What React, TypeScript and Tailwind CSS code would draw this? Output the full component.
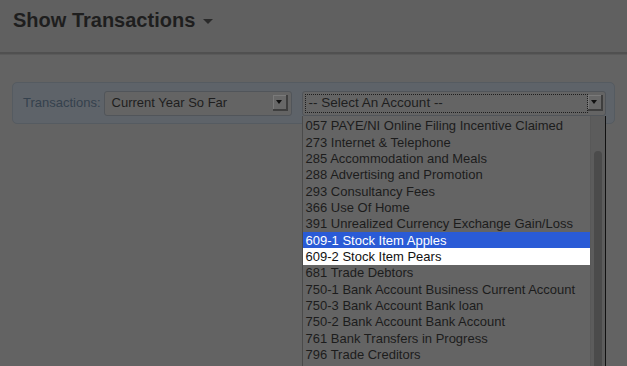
import React from "react";

const accounts = [
  "057 PAYE/NI Online Filing Incentive Claimed",
  "273 Internet & Telephone",
  "285 Accommodation and Meals",
  "288 Advertising and Promotion",
  "293 Consultancy Fees",
  "366 Use Of Home",
  "391 Unrealized Currency Exchange Gain/Loss",
  "609-1 Stock Item Apples",
  "609-2 Stock Item Pears",
  "681 Trade Debtors",
  "750-1 Bank Account Business Current Account",
  "750-3 Bank Account Bank loan",
  "750-2 Bank Account Bank Account",
  "761 Bank Transfers in Progress",
  "796 Trade Creditors",
];

function ArrowBox() {
  return (
    <div className="flex h-[16px] w-[15px] items-center justify-center border-r-2 border-b-2 border-[#3e3e3e] bg-[#686868] shadow-[inset_1px_1px_0_#7a7a7a]">
      <div className="h-0 w-0 border-x-[3.5px] border-t-[4px] border-x-transparent border-t-[#111]" />
    </div>
  );
}

export default function App() {
  return (
    <div
      className="relative h-[366px] w-[627px] overflow-hidden bg-[#636363] text-[#1c1c1c]"
      style={{ fontFamily: '"Liberation Sans", Arial, sans-serif' }}
    >
      {/* header */}
      <div className="flex h-[52px] items-start gap-[8px] bg-[#606060] pl-[13px] pt-[5px]">
        <h1 className="text-[20px] font-bold leading-[30px] text-[#1e1e1e]">Show Transactions</h1>
        <div className="mt-[14px] h-0 w-0 border-x-[5px] border-t-[5px] border-x-transparent border-t-[#2a2a2a]" />
      </div>
      <div className="h-[2px] bg-[#505050]" />
      <div className="h-[1px] bg-[#5a5a5a]" />

      {/* filter panel */}
      <div className="ml-[12px] mr-[12px] mt-[27px] flex h-[42px] items-center rounded-[5px] border border-[#555b61] bg-[#5e6369] pl-[10px]">
        <span className="text-[13px] text-[#35414d]">Transactions:</span>
        <div className="ml-[3px] flex h-[25px] w-[188px] items-center justify-between rounded-[3px] border border-[#51555a] bg-[#646464] pl-[7px] pr-[3px]">
          <span className="text-[13px] text-[#1e1e1e]">Current Year So Far</span>
          <ArrowBox />
        </div>

        <div className="relative ml-[10px]">
          <div className="flex h-[25px] w-[304px] items-center justify-between rounded-[3px] border border-[#51555a] bg-[#646464] pl-[2px] pr-[2px]">
            <div className="flex h-[19px] w-[284px] items-center border border-dotted border-[#1e1e1e] pl-[3px] text-[13.5px] text-[#1e1e1e]">
              -- Select An Account --
            </div>
            <ArrowBox />
          </div>

          {/* dropdown list */}
          <div className="absolute left-0 top-[25px] z-10 flex h-[260px] w-[304px] border-l border-r border-l-[#4a4a4a] border-r-[#111] bg-[#646464]">
            <div className="flex-1 pt-[2px]">
              {accounts.map((a) => {
                const sel = a.startsWith("609-1");
                const hov = a.startsWith("609-2");
                return (
                  <div
                    key={a}
                    className={
                      "flex h-[16.35px] items-center pl-[3px] text-[13px] leading-none " +
                      (sel ? "bg-[#2a5bd6] text-white" : hov ? "bg-white text-[#111]" : "text-[#1c1c1c]")
                    }
                  >
                    {a}
                  </div>
                );
              })}
            </div>
            <div className="w-[15px] border-l border-[#585858] bg-[#5c5c5c] pl-[3px] pt-[35px]">
              <div className="h-[260px] w-[8px] rounded-t-[4px] bg-[#4b4b4b]" />
            </div>
          </div>
        </div>
      </div>
    </div>
  );
}
